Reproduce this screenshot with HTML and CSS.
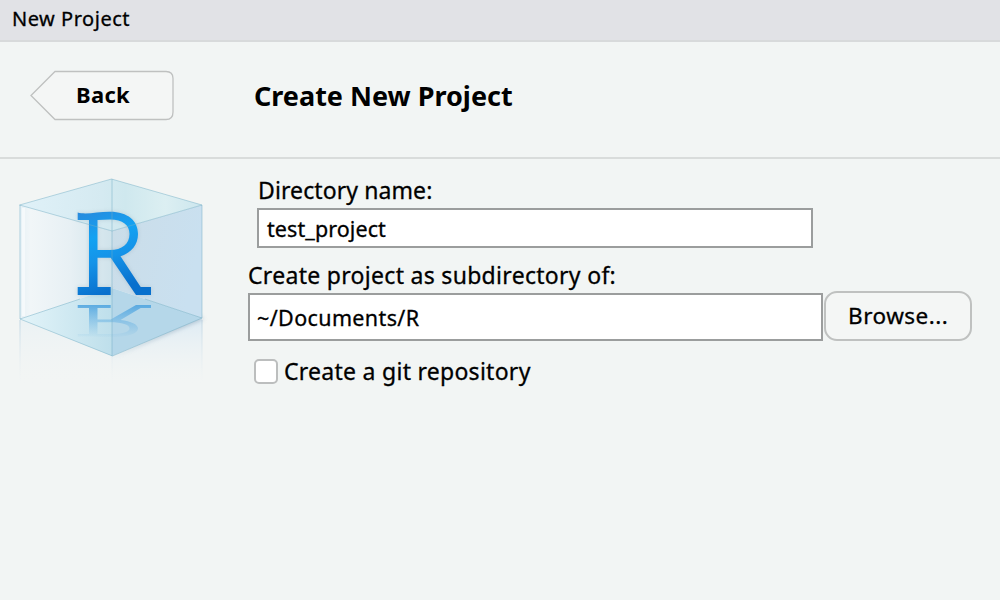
FILE: index.html
```html
<!DOCTYPE html>
<html lang="en">
<head>
<meta charset="utf-8">
<title>New Project</title>
<link rel="stylesheet" href="styles.css">
</head>
<body>
<div class="dialog">
  <div class="titlebar"><span class="title-text">New Project</span></div>
  <header class="header">
    <button class="back" type="button">
      <svg class="back-shape" width="144" height="51" viewBox="0 0 144 51"><path d="M25 1.500H136Q143 1.500 143 8.500V42Q143 49.500 136 49.500H25L1 25.500Z" fill="#f4f6f5" stroke="#bfc1c0" stroke-width="1.300"/></svg>
      <span class="back-text">Back</span>
    </button>
    <h1 class="heading"><span class="heading-text">Create New Project</span></h1>
  </header>
  <main class="content">
    <svg class="logo" width="230" height="235" viewBox="0 165 230 235">
      <defs>
        <linearGradient id="left" x1="0" x2="1"><stop offset="0" stop-color="#e6f1f6"/><stop offset=".12" stop-color="#f1f6f8"/><stop offset=".55" stop-color="#e7f0f4"/><stop offset="1" stop-color="#d0e3eb"/></linearGradient>
        <linearGradient id="right" x1="0" x2="1" y2=".3"><stop offset="0" stop-color="#cbdde8"/><stop offset="1" stop-color="#c9e0f0"/></linearGradient>
        <linearGradient id="top" x1="0" x2="1"><stop offset="0" stop-color="#e0f1f8"/><stop offset=".45" stop-color="#d5eaf1"/><stop offset=".58" stop-color="#cfe8ee"/><stop offset=".8" stop-color="#dceff2"/><stop offset="1" stop-color="#cce6ee"/></linearGradient>
        <linearGradient id="floorLeft" x1="0" x2="1"><stop offset="0" stop-color="#e3f4f9"/><stop offset="1" stop-color="#bedfeb"/></linearGradient>
        <linearGradient id="letter" x1="0" y1="0" x2=".3" y2="1"><stop offset="0" stop-color="#2989dc"/><stop offset=".35" stop-color="#13a2f2"/><stop offset=".62" stop-color="#1593e8"/><stop offset="1" stop-color="#0870cd"/></linearGradient>
        <linearGradient id="mirror" gradientUnits="userSpaceOnUse" x1="0" x2="0" y1="295" y2="208"><stop offset="0" stop-color="#4aa2df" stop-opacity=".85"/><stop offset="1" stop-color="#65b2e4" stop-opacity="0"/></linearGradient>
        <linearGradient id="fade" x1="0" x2="0" y1="0" y2="1"><stop offset="0" stop-color="#d9e9f4"/><stop offset="1" stop-color="#f2f5f4" stop-opacity="0"/></linearGradient>
        <linearGradient id="edgeFade" gradientUnits="userSpaceOnUse" x1="0" x2="0" y1="320" y2="385"><stop offset="0" stop-color="#c8dbe6"/><stop offset="1" stop-color="#e9eff2" stop-opacity="0"/></linearGradient>
        <filter id="soft" x="-20%" y="-20%" width="140%" height="140%"><feGaussianBlur stdDeviation="2"/></filter>
        <path id="glyph" fill-rule="evenodd" d="M77.700 212.500C86 215 99 211.500 110 211.700C128 211.700 138 221 138 234C138 245 131 253 120.500 256.300L140.700 287H151V295H136L110.700 257.700H97.500V287H110.700V295H77.700V287H89V220H77.700ZM97.500 220V250H110C122 250 129.500 244 129.500 234C129.500 225 123 219.500 110 219.500Z"/>
      </defs>
      <path d="M20 319L112 356V386H20Z" fill="url(#fade)" opacity=".3"/>
      <path d="M112 356L202 318V386H112Z" fill="url(#fade)" opacity=".85"/>
      <path d="M20 320V385M202 320V385M112 356V386" stroke="url(#edgeFade)" stroke-width="1.200"/>
      <path d="M112 357L204 319L198 315Z" fill="#8fa9bd" opacity=".6" filter="url(#soft)"/>
      <path d="M19.500 205L112 231V288L20 319Z" fill="url(#left)"/>
      <path d="M112 231L202 205V318L112 288Z" fill="url(#right)"/>
      <path d="M19.500 205L111.500 179L202 205L112 231Z" fill="url(#top)"/>
      <path d="M20 319L112 288V356Z" fill="url(#floorLeft)"/>
      <path d="M112 288L202 318L112 356Z" fill="#b5d7e9"/>
      <use href="#glyph" transform="translate(0 418.600) scale(1 -.385)" fill="url(#mirror)"/>
      <use href="#glyph" fill="#78909f" opacity=".3" filter="url(#soft)"/>
      <use href="#glyph" fill="url(#letter)"/>
      <path d="M19.500 205L111.500 179L202 205L112 231ZM20 205V319L112.500 356L202 318V205M112 179V356M20 319L80 299M145 299L202 318" fill="none" stroke="#72adc5" stroke-opacity=".48"/>
      <path d="M23.500 208V316" stroke="#fff" stroke-opacity=".5" stroke-width="3"/>
    </svg>
    <form class="form">
      <label class="label dir-label" for="dir"><span class="dir-text">Directory name:</span></label>
      <div class="field dir-field" id="dir"><span class="dir-value">test_project</span></div>
      <label class="label parent-label"><span class="parent-text">Create project as subdirectory of:</span></label>
      <div class="parent-row">
        <div class="field parent-field"><span class="parent-value">~/Documents/R</span></div>
        <button class="browse" type="button"><span class="browse-text">Browse...</span></button>
      </div>
      <label class="git"><span class="checkbox"></span><span class="git-text">Create a git repository</span></label>
    </form>
  </main>
</div>
</body>
</html>
```
FILE: styles.css
```css
* { box-sizing: border-box; }
body { margin: 0; background: #f2f5f4; color: #000; font-family: "Noto Sans", "Open Sans", sans-serif; overflow: hidden; -webkit-text-stroke: .3px #000; }
.dialog { width: 1000px; height: 600px; }
.titlebar { height: 42px; padding: 4px 0 0 12px; background: #e1e2e6; border-bottom: 2px solid #d8dadb; font-size: 20px; line-height: 30px; letter-spacing: .52px; }
.header { display: flex; height: 117px; padding: 28px 0 0 30px; border-bottom: 2px solid #d9dcdb; }
.back { position: relative; width: 144px; height: 51px; padding: 0 0 2px; border: 0; background: none; font: bold 22px/49px "Noto Sans", sans-serif; letter-spacing: .3px; color: #000; text-align: left; -webkit-text-stroke: 0; }
.back-shape { position: absolute; inset: 0; }
.back-text { position: relative; margin-left: 46px; }
.heading { margin: 0 0 0 80px; font-size: 27px; line-height: 52px; white-space: nowrap; -webkit-text-stroke: 0; }
.content { display: flex; height: 441px; }
.logo { flex: none; margin-top: 6px; }
.form { width: 752px; margin-left: 18px; padding-top: 16px; white-space: nowrap; }
.label { display: block; font-size: 23px; line-height: 30px; }
.dir-label { margin-left: 10px; height: 33px; letter-spacing: .1px; }
.field { border: 2px solid #9b9d9d; background: #fff; }
.dir-field { width: 556px; height: 40px; margin-left: 9px; padding-left: 8px; font-size: 21.500px; line-height: 37px; letter-spacing: .08px; }
.parent-label { height: 45px; padding-top: 12px; letter-spacing: .3px; }
.parent-row { display: flex; height: 48px; }
.parent-field { width: 575px; height: 48px; padding-left: 7px; font-size: 21.500px; line-height: 45px; letter-spacing: .38px; }
.browse { width: 148px; height: 50px; margin: -2px 0 0 1px; padding: 0 0 0 22px; border: 2px solid #bfc1c0; border-radius: 13px; background: #f4f6f5; font: 22.500px/46px "Noto Sans", sans-serif; letter-spacing: .5px; color: #000; text-align: left; -webkit-text-stroke: .3px #000; }
.git { display: flex; margin: 17px 0 0 6px; font-size: 23px; line-height: 27px; letter-spacing: .27px; }
.checkbox { width: 24px; height: 25px; margin: 1px 6px 0 0; border: 2px solid #bcbebe; border-radius: 5px; background: #fff; }
```
